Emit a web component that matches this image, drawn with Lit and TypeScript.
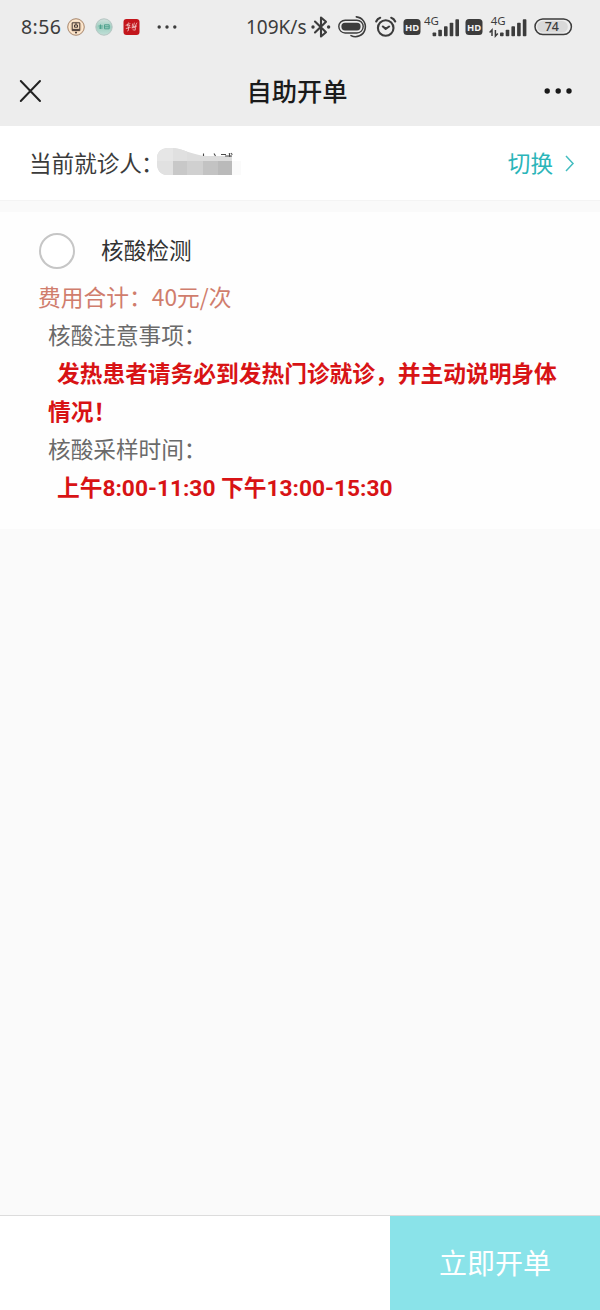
import { LitElement, html, svg, css } from "lit";
import { customElement, property } from "lit/decorators.js";

@customElement("status-bar")
class StatusBar extends LitElement {
  static styles = css`
    :host { display: flex; align-items: center; height: 54px; box-sizing: border-box; padding-left: 21px; color: #3c3c3c; font-family: "Noto Sans", "Noto Sans CJK SC", sans-serif; }
    svg { display: block; flex: none; }
    .time { width: 46px; font-size: 19.5px; letter-spacing: .4px; line-height: 54px; white-space: nowrap; }
    .speed { width: 65px; font-size: 19px; line-height: 54px; white-space: nowrap; }
    .label { font-family: "Noto Sans", sans-serif; fill: #3c3c3c; }
    .seal { margin-right: 10px; }
    .more { margin: 0 69px 0 17px; }
    .bt { margin-right: 7px; }
    .ring { margin-right: 7px; }
    .alarm { margin-right: 6px; }
    .hd { margin-right: 3px; }
    .sig { margin-right: 5px; }
    .sig2 { margin-right: 6px; }
  `;
  private hd() {
    return html`<svg class="hd" width="18" height="18" viewBox="0 0 18 18">
      <rect x=".5" y="1" width="17" height="16" rx="3.5" fill="#3c3c3c"/>
      <text x="9" y="12.6" text-anchor="middle" font-family="Noto Sans, sans-serif" font-size="9.5" font-weight="700" fill="#f2f2f2">HD</text>
    </svg>`;
  }
  private bars(x: number) {
    return [3.8, 6.5, 10, 13.5, 17].map((h, i) => svg`<rect x=${x + i * 5.7} y=${21.3 - h} width="3.6" height=${h} rx=".8" fill="#3c3c3c"/>`);
  }
  render() {
    return html`
      <span class="time">8:56</span>
      <svg class="seal" width="18" height="18" viewBox="0 0 18 18">
        <circle cx="9" cy="9" r="8.3" fill="#f5d9bb" stroke="#a98a72" stroke-width="1"/>
        <circle cx="9" cy="9" r="6.7" fill="none" stroke="#fff0dc" stroke-width=".8"/>
        <path d="M5.2 4.8h7.6v6.6H5.2zM7.5 7h3v2.2h-3zM9 4.8V7M5.2 11.4v1.2h7.6v-1.2M9 13.6v2M8 14.6h2" fill="none" stroke="#463a35" stroke-width="1"/>
      </svg>
      <svg class="seal" width="18" height="18" viewBox="0 0 18 18">
        <defs><linearGradient id="g" x2="0" y2="1"><stop stop-color="#d3e2de"/><stop offset=".5" stop-color="#9fcfc1"/><stop offset="1" stop-color="#c2e0d8"/></linearGradient></defs>
        <circle cx="9" cy="9" r="8.2" fill="url(#g)" stroke="#b5c5c2"/>
        <path d="M3.6 8h4.2M4 10h3.6M5.5 6.5v4.5M9.5 6.8h4.7v4H9.5zM9.5 8.8h4.7" fill="none" stroke="#4fa28e" stroke-width="1"/>
      </svg>
      <svg width="17" height="18" viewBox="0 0 17 18">
        <rect x=".5" y="1" width="16" height="16" rx="3" fill="#c3161c"/>
        <path d="M3 7.2l4-1.5M5.5 4.8L4 8l3-.6-2 2.5M3.2 10.5l4-1M5.5 9.2v3.2l-1 .5M9.5 6l-.4 4.2M11.3 5l-1 4.5M13.8 5l-2.5 5M9.5 9.5l4-1.5M12.8 8.2l-.6 4-2.2-.4" fill="none" stroke="#f7d8d5" stroke-width=".7" stroke-linecap="round"/>
      </svg>
      <svg class="more" width="20" height="6" viewBox="0 0 20 6"><g fill="#3c3c3c"><circle cx="2.2" cy="3" r="1.7"/><circle cx="10" cy="3" r="1.7"/><circle cx="17.8" cy="3" r="1.7"/></g></svg>
      <span class="speed">109K/s</span>
      <svg class="bt" width="20" height="22" viewBox="0 0 20 22">
        <path d="M4 5.5l11 10.8-5 4.2V1.5l5 4.2L4 16.5" fill="none" stroke="#3c3c3c" stroke-width="2.1" stroke-linejoin="round" stroke-linecap="round"/>
        <circle cx="2" cy="11" r="1.7" fill="#3c3c3c"/><circle cx="17.6" cy="11" r="1.7" fill="#3c3c3c"/>
      </svg>
      <svg class="ring" width="30" height="24" viewBox="0 0 30 24">
        <rect x=".8" y="5.2" width="24.4" height="12.8" rx="6.4" fill="none" stroke="#3c3c3c" stroke-width="1.4"/>
        <rect x="3.4" y="7.8" width="19.2" height="7.6" rx="3.6" fill="#3c3c3c"/>
        <path d="M18.3 1.9A9.9 9.9 0 1 1 13 20.6" fill="none" stroke="#3c3c3c" stroke-width="1.6" stroke-linecap="round"/>
      </svg>
      <svg class="alarm" width="22" height="22" viewBox="0 0 22 22">
        <g fill="none" stroke="#3c3c3c" stroke-width="2.1" stroke-linecap="round" stroke-linejoin="round">
          <circle cx="10.7" cy="12" r="7.8"/><path d="M1.2 5.5C1.9 3.8 3.5 2.2 5.2 1.7M20.2 5.5C19.5 3.8 17.9 2.2 16.2 1.7M7.9 10.5l2.8 2.4 3.4-2.4"/>
        </g>
      </svg>
      ${this.hd()}
      <svg class="sig" width="36" height="36" viewBox="0 -6 36 36">
        <text class="label" x="0" y="10.3" font-size="11.5">4G</text>${this.bars(8.6)}
      </svg>
      ${this.hd()}
      <svg class="sig2" width="42" height="36" viewBox="-4 -6 42 36">
        <text class="label" x=".8" y="10.3" font-size="11.5">4G</text>${this.bars(10)}
        <path d="M2 21v-6L-.4 17.6M5.4 15v6l2.4-2.6" fill="none" stroke="#3c3c3c" stroke-width="1.5"/>
      </svg>
      <svg width="39" height="18" viewBox="0 0 39 18">
        <rect x="1" y="1" width="36.4" height="15.6" rx="7.8" fill="#ededed" stroke="#3c3c3c" stroke-width="1.5"/>
        <path d="M9 3h19a5.8 5.8 0 0 1 0 11.6H9A5.8 5.8 0 0 1 9 3" fill="#d3d3d3" opacity=".8"/>
        <text class="label" x="17.8" y="13.3" text-anchor="middle" font-size="12.4" font-weight="500">74</text>
      </svg>`;
  }
}

@customElement("nav-bar")
class NavBar extends LitElement {
  @property() heading = "";
  static styles = css`
    :host { display: grid; grid-template-columns: 60px 1fr 60px; align-items: center; height: 72px; box-sizing: border-box; }
    svg { display: block; margin-top: 1px; }
    .close { margin-left: 19px; }
    h1 { margin: 0; padding-right: 6px; text-align: center; color: #1a1a1a; font: 500 25.3px/40px "Noto Sans CJK SC", sans-serif; }
  `;
  render() {
    return html`
      <svg class="close" width="23" height="24" viewBox="0 0 23 24"><path d="M1.8 2l19.2 20M21 2L1.8 22" stroke="#222" stroke-width="2" stroke-linecap="round"/></svg>
      <h1>${this.heading}</h1>
      <svg width="36" height="10" viewBox="0 0 36 10"><g fill="#191919"><circle cx="7.2" cy="5" r="2.7"/><circle cx="18.2" cy="5" r="2.7"/><circle cx="29" cy="5" r="2.7"/></g></svg>`;
  }
}

@customElement("patient-row")
class PatientRow extends LitElement {
  static styles = css`
    :host { display: flex; align-items: center; height: 75px; box-sizing: border-box; padding: 0 24px 0 29px; background: #fff; border-bottom: 1px solid #f4f4f4; font: 22.6px/36px "Noto Sans CJK SC", sans-serif; color: #3b3b3b; }
    svg { display: block; flex: none; }
    .name { width: 128px; white-space: nowrap; }
    .colon { margin-left: -1px; }
    .mosaic { margin-bottom: 4px; }
    .switch { margin-left: auto; margin-right: 11px; color: #2bb5b9; }
  `;
  render() {
    return html`
      <span class="name">当前就诊人<span class="colon">：</span></span>
      <svg class="mosaic" width="86" height="34" viewBox="0 0 86 34">
        <defs><clipPath id="c"><path d="M0 13C1 6 6 4 12 4c14-.5 21 7 38 8h25v19H10C3 31 0 25 0 20z"/></clipPath></defs>
        <g clip-path="url(#c)">
          <rect width="86" height="34" fill="#ddd"/>
          <rect width="16" height="17" fill="#e6e6e6"/><rect x="16" width="14" height="17" fill="#e0e0e0"/>
          <rect y="17" width="16" height="17" fill="#e1e1e1"/><rect x="16" y="17" width="14" height="17" fill="#c8c8c8"/>
          <rect x="30" y="17" width="16" height="17" fill="#d0d0d0"/><rect x="46" y="17" width="15" height="17" fill="#c3c3c3"/>
          <rect x="61" y="17" width="14" height="17" fill="#bababa"/>
        </g>
        <path d="M46.5 9.5V12M57 9.5l1.5 2.5M64 10.5h5M68 12h7M72.3 9l.5 4M73.8 9.2l1.6 1.4" stroke="#4a4a4a" stroke-width="1.1" fill="none"/>
        <rect x="75" y="17" width="9" height="14" fill="#fafafa"/>
      </svg>
      <span class="switch">切换</span>
      <svg width="12" height="18" viewBox="0 0 12 18"><path d="M2 2l7 7.5L2 17" fill="none" stroke="#44bdc0" stroke-width="1.5"/></svg>`;
  }
}

@customElement("order-card")
class OrderCard extends LitElement {
  static styles = css`
    :host { display: block; height: 317px; box-sizing: border-box; padding: 10px 38px 0; background: #fefefe; font: 22.65px/38px "Noto Sans CJK SC", sans-serif; color: #6a6a6a; }
    .option { display: flex; align-items: center; height: 56px; color: #333; }
    .radio { width: 36px; height: 36px; box-sizing: border-box; border: 2px solid #c6c6c6; border-radius: 50%; margin: 1px 26.5px 0 .5px; background: #fff; }
    .fee { color: #d07d6d; font-size: 22.75px; }
    .notes { padding-left: 10px; }
    .warn { color: #d81315; font-size: 22.72px; font-weight: 700; text-indent: 9px; white-space: nowrap; font-family: Roboto, "Noto Sans CJK SC", sans-serif; padding-top: 2px; margin-bottom: -2px; }
  `;
  render() {
    return html`
      <div class="option"><span class="radio"></span><span>核酸检测</span></div>
      <div class="fee">费用合计：40元/次</div>
      <div class="notes">
        <div>核酸注意事项：</div>
        <div class="warn">发热患者请务必到发热门诊就诊，并主动说明身体<br>情况！</div>
        <div>核酸采样时间：</div>
        <div class="warn">上午8:00-11:30 下午13:00-15:30</div>
      </div>`;
  }
}

@customElement("app-root")
class AppRoot extends LitElement {
  static styles = css`
    :host { display: flex; flex-direction: column; width: 600px; height: 1310px; overflow: hidden; background: #fafafa; }
    header { background: #ededed; flex: none; }
    order-card { margin-top: 11px; }
    footer { display: flex; justify-content: flex-end; height: 95px; box-sizing: border-box; margin-top: auto; border-top: 1px solid #dcdcdc; background: #fff; }
    button { width: 210px; border: 0; padding: 0 0 2px; background: #8ae3e9; color: #fff; font: 28px/40px "Noto Sans CJK SC", sans-serif; }
  `;
  render() {
    return html`
      <header><status-bar></status-bar><nav-bar heading="自助开单"></nav-bar></header>
      <patient-row></patient-row>
      <order-card></order-card>
      <footer><button>立即开单</button></footer>`;
  }
}
